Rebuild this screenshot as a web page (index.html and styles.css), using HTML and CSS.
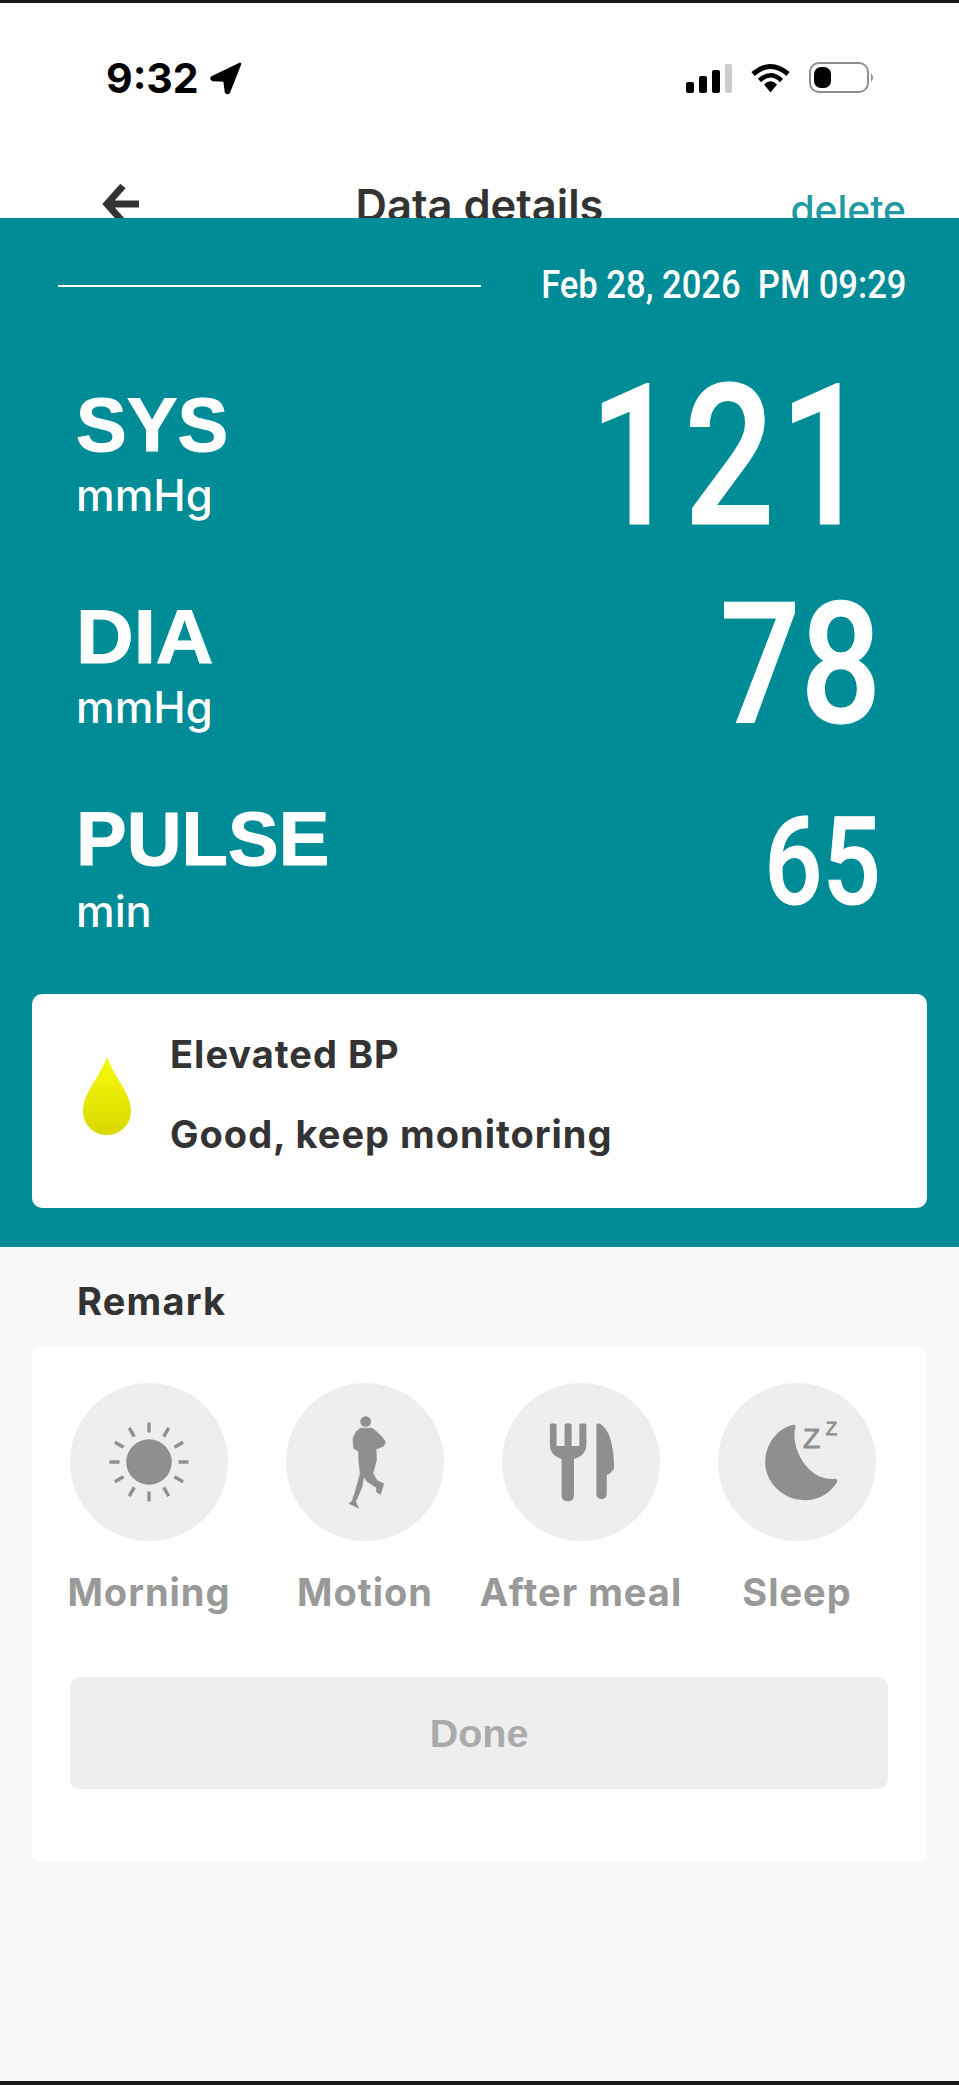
FILE: index.html
```html
<!DOCTYPE html>
<html lang="en">
<head>
<meta charset="utf-8">
<title>Data details</title>
<link rel="stylesheet" href="styles.css">
</head>
<body>
<div class="screen">
  <header class="top">
    <div class="status">
      <div class="clock">
        <span class="time">9:32</span>
        <svg class="loc" width="34" height="34" viewBox="0 0 34 34"><path d="M31 3 L3 16.500 Q1.500 18 4 19 L15.500 19.500 L17 31 Q18.500 33 20 31 Z" fill="#000" stroke="#000" stroke-width="2.500" stroke-linejoin="round"/></svg>
      </div>
      <div class="sys">
        <svg width="46" height="30" viewBox="0 0 46 30"><rect x="0" y="19" width="8" height="11" rx="2" fill="#000"/><rect x="13" y="13" width="8" height="17" rx="2" fill="#000"/><rect x="26" y="7" width="8" height="23" rx="2" fill="#000"/><rect x="39" y="1" width="7" height="29" rx="2" fill="#ccc"/></svg>
        <svg width="39" height="30" viewBox="0 0 39 30"><path d="M2 11 Q19.500 -4 37 11" fill="none" stroke="#000" stroke-width="5"/><path d="M8.500 17.500 Q19.500 7 30.500 17.500" fill="none" stroke="#000" stroke-width="4.500"/><path d="M13 21.500 Q19.500 15 26 21.500 L19.500 29.500 Z" fill="#000"/></svg>
        <svg width="66" height="32" viewBox="0 0 66 32"><rect x="1" y="1" width="58" height="29" rx="9" fill="none" stroke="#8e8e8e" stroke-width="2"/><rect x="5" y="5" width="17" height="21" rx="7" fill="#000"/><path d="M62 11 Q66 15.500 62 20 Z" fill="#8e8e8e"/></svg>
      </div>
    </div>
    <nav class="bar">
      <svg class="back" width="38" height="42" viewBox="0 0 38 42"><path d="M22 3 L6 21 L22 39 M6 21 H38" fill="none" stroke="#333" stroke-width="7"/></svg>
      <span class="title">Data details</span>
      <span class="delete">delete</span>
    </nav>
  </header>

  <section class="panel">
    <div class="stamp">
      <span class="rule"></span>
      <span class="when">Feb 28, 2026&nbsp; PM 09:29</span>
    </div>
    <div class="reading sys-row">
      <div class="label"><strong>SYS</strong><span>mmHg</span></div>
      <span class="value v-sys">121</span>
    </div>
    <div class="reading dia-row">
      <div class="label"><strong class="wide">DIA</strong><span>mmHg</span></div>
      <span class="value v-dia">78</span>
    </div>
    <div class="reading pulse-row">
      <div class="label"><strong>PULSE</strong><span class="low">min</span></div>
      <span class="value v-pulse">65</span>
    </div>
    <div class="verdict">
      <svg class="drop" width="48" height="78" viewBox="0 0 48 78"><defs><linearGradient id="dropFill" x1="0" y1="0" x2="0" y2="1"><stop offset="0" stop-color="#f8fb0a"/><stop offset="1" stop-color="#d8d800"/></linearGradient></defs><path d="M24 0 C31 20 48 36 48 54 C48 68 37 78 24 78 C11 78 0 68 0 54 C0 36 17 20 24 0 Z" fill="url(#dropFill)"/></svg>
      <div class="verdict-text">
        <p>Elevated BP</p>
        <p>Good, keep monitoring</p>
      </div>
    </div>
  </section>

  <section class="remark">
    <h2>Remark</h2>
    <div class="card">
      <ul class="tags">
        <li class="tag">
          <span class="disc">
            <svg width="158" height="158" viewBox="90 70 472 472"><circle cx="326" cy="306" r="68" fill="#8f8f8f"/><path transform="translate(326 306)" fill="none" stroke="#8f8f8f" stroke-width="10" d="M0 -88V-118M0 88V118M88 0H118M-88 0H-118M44 -76L59 -102M-44 -76L-59 -102M44 76L59 102M-44 76L-59 102M76 -44L102 -59M-76 -44L-102 -59M76 44L102 59M-76 44L-102 59"/></svg>
          </span>
          <span class="name">Morning</span>
        </li>
        <li class="tag">
          <span class="disc">
            <svg width="158" height="158" viewBox="738 70 472 472"><circle cx="976" cy="185" r="16" fill="#8f8f8f"/><path d="M960 205 L995 205 Q1020 222 1035 245 L1030 258 L1007 268 L1008 300 L998 340 L1010 362 L1030 370 L1020 403 L1008 395 L1008 382 L980 364 L970 350 L965 380 L946 425 L955 444 L926 430 L936 422 L945 395 L960 340 L956 310 L955 275 L940 265 L938 235 L948 215 Z" fill="#8f8f8f" stroke="#8f8f8f" stroke-width="2" stroke-linejoin="round"/></svg>
          </span>
          <span class="name">Motion</span>
        </li>
        <li class="tag">
          <span class="disc">
            <svg width="158" height="158" viewBox="95 70 472 472"><path d="M238 197 Q238 190 248 190 Q258 190 258 197 V258 H282 V197 Q282 190 292 190 Q303 190 303 197 V258 H326 V197 Q326 190 336 190 Q347 190 347 197 V255 Q347 285 310 297 V405 Q310 423 291 423 Q273 423 273 405 V297 Q238 285 238 255 Z" fill="#8f8f8f"/><path d="M377 197 Q377 188 388 192 Q428 215 430 325 Q425 338 408 345 V400 Q408 417 392 417 Q377 417 377 400 Z" fill="#8f8f8f"/></svg>
          </span>
          <span class="name">After meal</span>
        </li>
        <li class="tag">
          <span class="disc">
            <svg width="158" height="158" viewBox="745 70 472 472"><path d="M970 195 Q978 193 976 203 C960 270 1020 365 1092 356 Q1105 356 1100 367 C1070 415 1020 425 985 418 C930 410 885 360 886 305 C887 250 925 205 970 195 Z" fill="#8f8f8f"/><text class="zz z1" x="999" y="265">Z</text><text class="zz z2" x="1067" y="225">Z</text></svg>
          </span>
          <span class="name">Sleep</span>
        </li>
      </ul>
      <button class="done" type="button">Done</button>
    </div>
  </section>
</div>
</body>
</html>
```

FILE: styles.css
```css
* { box-sizing: border-box; }

html, body {
  margin: 0;
  padding: 0;
}

body {
  width: 959px;
  height: 2085px;
  overflow: hidden;
  background: #f8f8f8;
  font-family: "Inter", "Liberation Sans", sans-serif;
}

.screen {
  width: 959px;
  height: 2085px;
  display: flex;
  flex-direction: column;
  border-top: 3px solid #1a1a1a;
  border-bottom: 4px solid #1a1a1a;
  overflow: hidden;
}

/* Status bar and the navigation row cut off by the panel */
.top {
  height: 215px;
  background: #fff;
  overflow: hidden;
  flex: none;
}

.status {
  height: 107px;
  padding: 50px 84px 0 106px;
  display: flex;
  justify-content: space-between;
  align-items: flex-start;
}

.clock {
  display: flex;
  align-items: center;
  gap: 10px;
}

.time {
  font: 700 41px/50px "Inter", sans-serif;
  color: #000;
}

.loc { display: block; }

.sys {
  display: flex;
  align-items: center;
  gap: 19px;
  height: 50px;
}

.sys svg { display: block; }

.bar {
  display: grid;
  grid-template-columns: 1fr auto 1fr;
  align-items: start;
  height: 108px;
  padding: 71px 53px 0;
}

.back {
  margin: 2px 0 0 48px;
}

.title {
  margin-top: -1px;
  font: 600 43.500px/50px "Inter", sans-serif;
  color: #333;
  white-space: nowrap;
}

.delete {
  justify-self: end;
  margin-top: 4px;
  font: 500 39px/50px "Inter", sans-serif;
  color: #1f9aa3;
}

/* Teal readings panel */
.panel {
  height: 1029px;
  flex: none;
  background: #008c97;
  color: #fff;
  padding: 0 32px;
}

.stamp {
  display: flex;
  justify-content: space-between;
  align-items: center;
  height: 48px;
  margin: 43px 21px 73px 26px;
}

.rule {
  width: 423px;
  height: 2px;
  margin-top: 2px;
  background: #fff;
}

.when {
  font: 500 38px/48px "Roboto", sans-serif;
  transform: scaleX(0.91);
  transform-origin: right center;
  white-space: nowrap;
}

.reading {
  display: flex;
  justify-content: space-between;
  align-items: flex-start;
  padding-left: 43px;
}

.label {
  display: flex;
  flex-direction: column;
  align-items: flex-start;
}

.label strong {
  margin-left: 1px;
  font: 700 76px/85px "Liberation Sans", sans-serif;
  -webkit-text-stroke: 1px #fff;
}

.label strong.wide {
  transform: scaleX(1.05);
  transform-origin: left center;
}

.label span {
  margin-top: 3px;
  margin-left: 1px;
  font: 500 43.500px/50px "Inter", sans-serif;
}

.label span.low { margin-top: 5px; }

.value {
  font-family: "Roboto", sans-serif;
  font-weight: 500;
  line-height: 1;
  -webkit-text-stroke: 1px #fff;
  transform-origin: right center;
}

.sys-row { height: 212px; padding-right: 53px; }
.dia-row { height: 202px; padding-right: 46px; }
.pulse-row { height: 198px; padding-right: 46px; }

.v-sys {
  font-size: 197px;
  letter-spacing: 5.500px;
  margin-top: -24px;
  transform: scaleX(0.81);
}

.v-dia {
  font-size: 169px;
  margin-top: -14px;
  transform: scaleX(0.84);
}

.v-pulse {
  font-size: 122px;
  margin-top: 6px;
  transform: scaleX(0.84);
}

.verdict {
  height: 214px;
  background: #fff;
  border-radius: 10px;
  color: #333;
  display: flex;
  align-items: center;
  gap: 39px;
  padding: 0 0 14px 51px;
}

.drop {
  display: block;
  margin-top: 4px;
}

.verdict-text p {
  margin: 0;
  font: 700 38px/80px "Inter", sans-serif;
  letter-spacing: 1px;
}

/* Remark tags */
.remark {
  flex: 1;
  padding: 0 32px;
}

.remark h2 {
  margin: 0;
  padding: 29px 0 0 45px;
  font: 700 38px/50px "Inter", sans-serif;
  letter-spacing: 1.200px;
  color: #333;
}

.card {
  margin-top: 20px;
  width: 895px;
  height: 517px;
  background: #fff;
  border-radius: 10px;
  padding: 37px 39px 0 38px;
}

.tags {
  list-style: none;
  margin: 0;
  padding: 0;
  display: grid;
  grid-template-columns: repeat(4, 158px);
  column-gap: 58px;
}

.tag {
  display: flex;
  flex-direction: column;
  align-items: center;
  gap: 26px;
}

.disc {
  width: 158px;
  height: 158px;
  border-radius: 50%;
  background: #eeeeee;
  display: flex;
  align-items: center;
  justify-content: center;
}

.disc svg { display: block; }

.name {
  font: 700 38px/50px "Inter", sans-serif;
  letter-spacing: 1px;
  color: #999;
  white-space: nowrap;
}

.zz {
  font-family: "Liberation Sans", sans-serif;
  fill: #8f8f8f;
  stroke: #8f8f8f;
  stroke-width: 2.500px;
}

.z1 { font-size: 84px; }
.z2 { font-size: 56px; }

.done {
  display: block;
  width: 818px;
  height: 112px;
  margin-top: 60px;
  padding: 0;
  border: 0;
  border-radius: 10px;
  background: #eeeeee;
  font: 700 39.500px "Liberation Sans", sans-serif;
  color: #aaa;
}
```
